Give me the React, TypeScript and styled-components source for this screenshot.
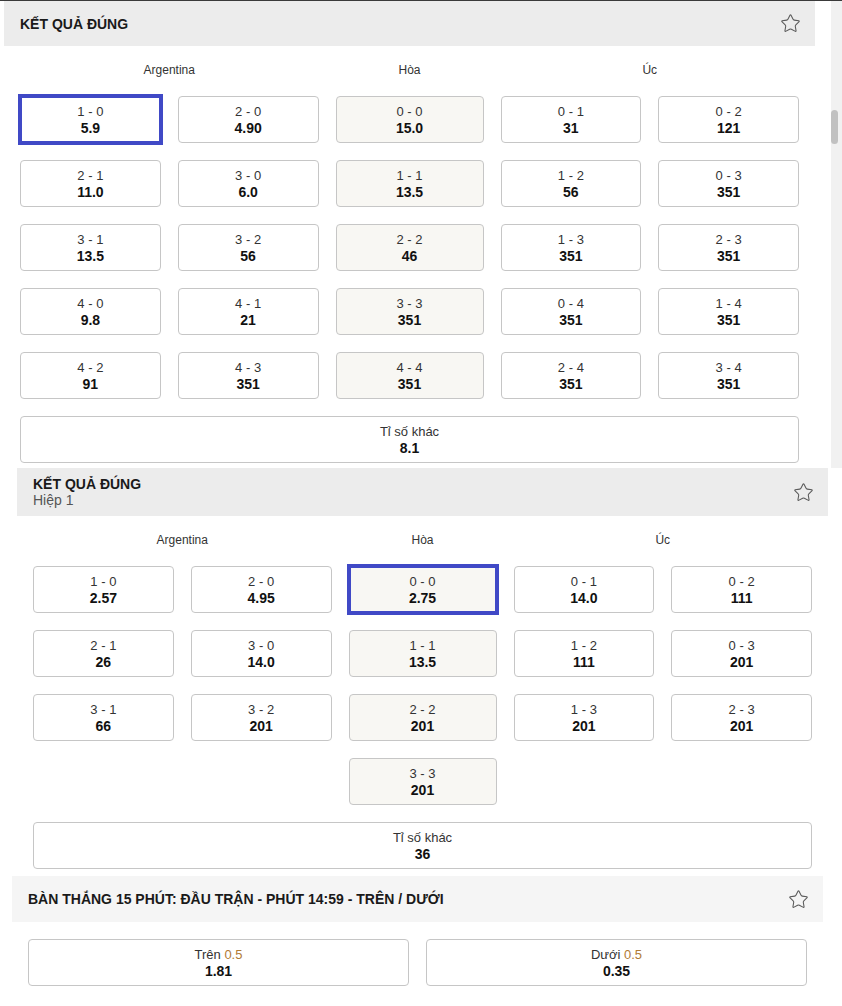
import styled, { createGlobalStyle } from 'styled-components';
import { Star } from 'lucide-react';

const GlobalStyle = createGlobalStyle`
    body {
        margin: 0;
        background: #fff;
        font-family: "Liberation Sans", Arial, sans-serif;
        color: #222;
    }
`;

const Page = styled.div`
    width: 842px;
    border-top: 1px solid #3a3a3a;
`;

const ScrollBlock = styled.div`
    display: flex;
    align-items: stretch;
`;

const ScrollTrack = styled.div`
    width: 11px;
    margin-left: auto;
    background: #f1f1f1;
    padding-top: 109px;
`;

const ScrollThumb = styled.div`
    width: 7px;
    height: 34px;
    border-radius: 4px;
    background: #c1c1c1;
`;

const Section = styled.section<{ $offset: number; $gap: number }>`
    width: 811px;
    margin-left: ${(p) => p.$offset}px;
    padding-bottom: ${(p) => p.$gap}px;
`;

const Header = styled.header<{ $tone: string; $height: number }>`
    display: flex;
    align-items: center;
    justify-content: space-between;
    height: ${(p) => p.$height}px;
    padding: 0 14px 0 16px;
    background: ${(p) => p.$tone};
`;

const TitleBox = styled.div`
    display: flex;
    flex-direction: column;
`;

const Title = styled.h3`
    margin: 0;
    font-size: 14px;
    line-height: 16px;
    font-weight: 700;
    color: #1a1a1a;
`;

const Subtitle = styled.span`
    font-size: 14px;
    line-height: 16px;
    color: #555;
`;

const Body = styled.div<{ $top: number }>`
    padding: ${(p) => p.$top}px 16px 0 16px;
`;

const Grid = styled.div<{ $cols: string }>`
    display: grid;
    grid-template-columns: ${(p) => p.$cols};
    column-gap: 17px;
    row-gap: 17px;
`;

const TeamLabel = styled.div<{ $span: string }>`
    grid-column: ${(p) => p.$span};
    text-align: center;
    font-size: 12px;
    line-height: 14px;
    color: #333;
    margin-bottom: 2px;
`;

const OddButton = styled.button<{ $draw?: boolean; $active?: boolean; $col?: string }>`
    grid-column: ${(p) => p.$col || 'auto'};
    height: 47px;
    display: flex;
    flex-direction: column;
    align-items: center;
    justify-content: center;
    padding: 0;
    border: 1px solid #c6c6c6;
    border-radius: ${(p) => (p.$active ? '0' : '4px')};
    background: ${(p) => (p.$draw ? '#f8f7f3' : '#fff')};
    font-family: inherit;
    cursor: pointer;
    outline: ${(p) => (p.$active ? '4px solid #4049c6' : 'none')};
    outline-offset: -2px;
`;

const Pick = styled.span`
    font-size: 13px;
    line-height: 16px;
    color: #333;
`;

const Line = styled.span`
    color: #b07b35;
`;

const Price = styled.span`
    font-size: 14px;
    line-height: 16px;
    font-weight: 700;
    color: #111;
`;

const FavIcon = styled(Star)`
    color: #5a5a5a;
    flex-shrink: 0;
`;

type Cell = [string, string];

const fullTime: Cell[][] = [
    [['1 - 0', '5.9'], ['2 - 0', '4.90'], ['0 - 0', '15.0'], ['0 - 1', '31'], ['0 - 2', '121']],
    [['2 - 1', '11.0'], ['3 - 0', '6.0'], ['1 - 1', '13.5'], ['1 - 2', '56'], ['0 - 3', '351']],
    [['3 - 1', '13.5'], ['3 - 2', '56'], ['2 - 2', '46'], ['1 - 3', '351'], ['2 - 3', '351']],
    [['4 - 0', '9.8'], ['4 - 1', '21'], ['3 - 3', '351'], ['0 - 4', '351'], ['1 - 4', '351']],
    [['4 - 2', '91'], ['4 - 3', '351'], ['4 - 4', '351'], ['2 - 4', '351'], ['3 - 4', '351']],
];

const firstHalf: Cell[][] = [
    [['1 - 0', '2.57'], ['2 - 0', '4.95'], ['0 - 0', '2.75'], ['0 - 1', '14.0'], ['0 - 2', '111']],
    [['2 - 1', '26'], ['3 - 0', '14.0'], ['1 - 1', '13.5'], ['1 - 2', '111'], ['0 - 3', '201']],
    [['3 - 1', '66'], ['3 - 2', '201'], ['2 - 2', '201'], ['1 - 3', '201'], ['2 - 3', '201']],
];

const SCORE_COLS = '1fr 1fr 148px 1fr 1fr';

const Labels = () => (
    <>
        <TeamLabel $span="1 / 3">Argentina</TeamLabel>
        <TeamLabel $span="3 / 4">Hòa</TeamLabel>
        <TeamLabel $span="4 / 6">Úc</TeamLabel>
    </>
);

const ScoreGrid = ({ rows, active }: { rows: Cell[][]; active: string }) => (
    <>
        {rows.map((row) =>
            row.map(([pick, price], i) => (
                <OddButton key={pick} $draw={i === 2} $active={pick === active}>
                    <Pick>{pick}</Pick>
                    <Price>{price}</Price>
                </OddButton>
            ))
        )}
    </>
);

const App = () => {
    return (
        <Page>
            <GlobalStyle />
            <ScrollBlock>
                <Section $offset={4} $gap={5}>
                    <Header $tone="#ececec" $height={45}>
                        <Title>KẾT QUẢ ĐÚNG</Title>
                        <FavIcon size={21} strokeWidth={1.2} />
                    </Header>
                    <Body $top={17}>
                        <Grid $cols={SCORE_COLS}>
                            <Labels />
                            <ScoreGrid rows={fullTime} active="1 - 0" />
                            <OddButton $col="1 / -1">
                                <Pick>Tỉ số khác</Pick>
                                <Price>8.1</Price>
                            </OddButton>
                        </Grid>
                    </Body>
                </Section>
                <ScrollTrack>
                    <ScrollThumb />
                </ScrollTrack>
            </ScrollBlock>

            <Section $offset={17} $gap={7}>
                <Header $tone="#ececec" $height={48}>
                    <TitleBox>
                        <Title>KẾT QUẢ ĐÚNG</Title>
                        <Subtitle>Hiệp 1</Subtitle>
                    </TitleBox>
                    <FavIcon size={21} strokeWidth={1.2} />
                </Header>
                <Body $top={17}>
                    <Grid $cols={SCORE_COLS}>
                        <Labels />
                        <ScoreGrid rows={firstHalf} active="0 - 0" />
                        <OddButton $draw $col="3 / 4">
                            <Pick>3 - 3</Pick>
                            <Price>201</Price>
                        </OddButton>
                        <OddButton $col="1 / -1">
                            <Pick>Tỉ số khác</Pick>
                            <Price>36</Price>
                        </OddButton>
                    </Grid>
                </Body>
            </Section>

            <Section $offset={12} $gap={20}>
                <Header $tone="#f5f5f5" $height={46}>
                    <Title>BÀN THẮNG 15 PHÚT: ĐẦU TRẬN - PHÚT 14:59 - TRÊN / DƯỚI</Title>
                    <FavIcon size={21} strokeWidth={1.2} />
                </Header>
                <Body $top={17}>
                    <Grid $cols="1fr 1fr">
                        <OddButton>
                            <Pick>
                                Trên <Line>0.5</Line>
                            </Pick>
                            <Price>1.81</Price>
                        </OddButton>
                        <OddButton>
                            <Pick>
                                Dưới <Line>0.5</Line>
                            </Pick>
                            <Price>0.35</Price>
                        </OddButton>
                    </Grid>
                </Body>
            </Section>
        </Page>
    );
};

export default App;
